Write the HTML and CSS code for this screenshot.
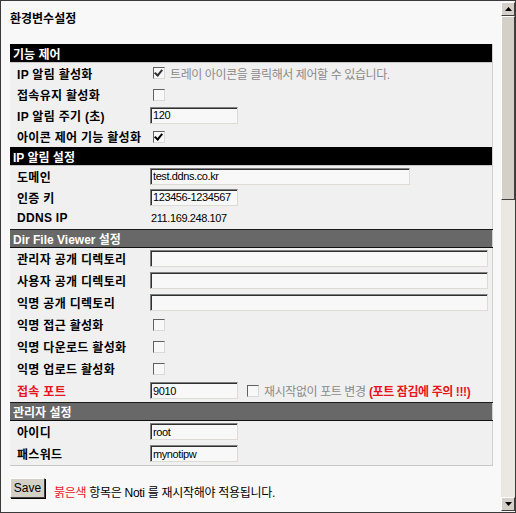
FILE: index.html
```html
<!DOCTYPE html>
<html>
<head>
    <title>환경변수설정</title>
    <link rel="stylesheet" href="styles.css">
</head>
<body>
    <div class="frame">
        <div class="page">
            <h2 class="title">환경변수설정</h2>
            <table class="settings">
                <tbody class="short">
                    <tr><th colspan="2" class="head">기능 제어</th></tr>
                    <tr>
                        <td class="label">IP 알림 활성화</td>
                        <td><span class="check on dim"></span><span class="note">트레이 아이콘을 클릭해서 제어할 수 있습니다.</span></td>
                    </tr>
                    <tr>
                        <td class="label">접속유지 활성화</td>
                        <td><span class="check"></span></td>
                    </tr>
                    <tr>
                        <td class="label">IP 알림 주기 (초)</td>
                        <td><input class="field small" value="120"></td>
                    </tr>
                    <tr>
                        <td class="label">아이콘 제어 기능 활성화</td>
                        <td><span class="check on"></span></td>
                    </tr>
                    <tr><th colspan="2" class="head">IP 알림 설정</th></tr>
                    <tr>
                        <td class="label">도메인</td>
                        <td><input class="field mid" value="test.ddns.co.kr"></td>
                    </tr>
                    <tr>
                        <td class="label">인증 키</td>
                        <td><input class="field small" value="123456-1234567"></td>
                    </tr>
                    <tr>
                        <td class="label">DDNS IP</td>
                        <td class="plain">211.169.248.107</td>
                    </tr>
                </tbody>
                <tbody class="tall">
                    <tr><th colspan="2" class="head gray">Dir File Viewer 설정</th></tr>
                    <tr>
                        <td class="label">관리자 공개 디렉토리</td>
                        <td><input class="field wide" value=""></td>
                    </tr>
                    <tr>
                        <td class="label">사용자 공개 디렉토리</td>
                        <td><input class="field wide" value=""></td>
                    </tr>
                    <tr>
                        <td class="label">익명 공개 디렉토리</td>
                        <td><input class="field wide" value=""></td>
                    </tr>
                    <tr>
                        <td class="label">익명 접근 활성화</td>
                        <td><span class="check"></span></td>
                    </tr>
                    <tr>
                        <td class="label">익명 다운로드 활성화</td>
                        <td><span class="check"></span></td>
                    </tr>
                    <tr>
                        <td class="label">익명 업로드 활성화</td>
                        <td><span class="check"></span></td>
                    </tr>
                    <tr>
                        <td class="label red">접속 포트</td>
                        <td>
                            <input class="field small" value="9010"><span class="check dim port"></span><span class="note">재시작없이 포트 변경</span>
                            <span class="warn">(포트 잠김에 주의 !!!)</span>
                        </td>
                    </tr>
                    <tr><th colspan="2" class="head gray">관리자 설정</th></tr>
                    <tr>
                        <td class="label">아이디</td>
                        <td><input class="field small" value="root"></td>
                    </tr>
                    <tr>
                        <td class="label">패스워드</td>
                        <td><input class="field small" value="mynotipw"></td>
                    </tr>
                </tbody>
            </table>
            <div class="footer">
                <button class="save">Save</button>
                <span class="hint"><span class="red-text">붉은색</span> 항목은 Noti 를 재시작해야 적용됩니다.</span>
            </div>
        </div>
        <div class="scrollbar">
            <div class="arrow up">
                <svg width="7" height="4" viewBox="0 0 7 4"><path d="M3.5 0 L7 4 L0 4 Z" fill="#000"/></svg>
            </div>
            <div class="thumb"></div>
            <div class="track"></div>
            <div class="arrow down">
                <svg width="7" height="4" viewBox="0 0 7 4"><path d="M0 0 L7 0 L3.5 4 Z" fill="#000"/></svg>
            </div>
        </div>
    </div>
</body>
</html>
```

FILE: styles.css
```css
body {
    margin: 0;
    font-family: "Liberation Sans", "Noto Sans CJK KR", sans-serif;
    font-size: 12px;
    color: #000;
}

.frame {
    width: 516px;
    height: 513px;
    box-sizing: border-box;
    border: 1px solid #3a3a3a;
    display: flex;
    overflow: hidden;
}

.page {
    flex: 1;
    background-color: #f8f8f8;
    padding: 0 6px 0 9px;
    overflow: hidden;
}

.title {
    font-size: 12px;
    font-weight: bold;
    margin: 0;
    height: 43px;
    line-height: 36px;
}

/* settings table */
.settings {
    width: 483px;
    border-collapse: collapse;
    background-color: #f0f0f0;
    border-right: 1px solid #d0d0d0;
    border-bottom: 1px solid #c8c8c8;
}

.settings td {
    padding: 0 0 1px 0;
    white-space: nowrap;
}

.short td {
    height: 20px;
}

.tall td {
    height: 21px;
}

.tall .admin td {
    height: 20px;
}

.head {
    background-color: #000;
    color: #fff;
    font-weight: bold;
    text-align: left;
    height: 18px;
    padding: 0 0 0 3px;
    border-bottom: 1px solid #c8c8c8;
}

.head.gray {
    background-color: #686868;
    border-top: 1px solid #1a1a1a;
    border-bottom: 1px solid #111;
    height: 16px;
}

.label {
    width: 133px;
    padding-left: 7px !important;
    font-weight: bold;
    letter-spacing: 0.3px;
}

.label.red {
    color: #e8141b;
}

.plain {
    padding-left: 1px !important;
    font-size: 11px;
    letter-spacing: -0.4px;
}

.field {
    box-sizing: border-box;
    height: 17px;
    margin: 0;
    padding: 0 0 0 2px;
    vertical-align: middle;
    font-family: "Liberation Sans", "Noto Sans CJK KR", sans-serif;
    font-size: 11px;
    letter-spacing: -0.4px;
    background-color: #f8f8f8;
    border: 1px solid;
    border-color: #808080 #dedbd4 #dedbd4 #808080;
    box-shadow: inset 1px 1px 0 #303030;
    outline: none;
}

.field.small {
    width: 88px;
}

.field.mid {
    width: 260px;
}

.field.wide {
    width: 338px;
}

.check {
    display: inline-block;
    box-sizing: border-box;
    width: 12px;
    height: 12px;
    margin-left: 3px;
    vertical-align: middle;
    background-color: #f8f8f8;
    border: 1px solid;
    border-color: #606060 #d8d8d8 #d8d8d8 #606060;
    position: relative;
}

.check.on::after {
    content: "";
    position: absolute;
    left: 2px;
    top: 0;
    width: 3px;
    height: 6px;
    border: solid #000;
    border-width: 0 2px 2px 0;
    transform: rotate(40deg);
}

.check.on.dim::after {
    border-color: #303030;
}

.check.port {
    margin-left: 9px;
}

.note {
    color: #8a8a8a;
    margin-left: 5px;
    vertical-align: middle;
    letter-spacing: -0.4px;
}

.warn {
    color: #e8141b;
    font-weight: bold;
    vertical-align: middle;
    letter-spacing: -0.4px;
}

/* footer */
.footer {
    display: flex;
    align-items: flex-start;
    margin-top: 12px;
}

.save {
    width: 35px;
    height: 20px;
    padding: 0;
    margin-left: 0;
    font-family: "Liberation Sans", sans-serif;
    font-size: 12px;
    background-color: #d4d0c8;
    border: 1px solid;
    border-color: #fff #404040 #404040 #fff;
    box-shadow: 1px 1px 0 #000;
}

.hint {
    margin: 5px 0 0 9px;
    letter-spacing: -0.3px;
}

.red-text {
    color: #e8141b;
}

/* fake scrollbar */
.scrollbar {
    width: 16px;
    display: flex;
    flex-direction: column;
    background-color: #f8f8f8;
    padding: 1px 0 1px 2px;
    box-sizing: border-box;
}

.arrow {
    height: 14px;
    display: flex;
    align-items: center;
    justify-content: center;
    background-color: #d4d0c8;
    border: 1px solid;
    border-color: #fff #404040 #404040 #fff;
    box-sizing: border-box;
}

.thumb {
    height: 184px;
    background-color: #d4d0c8;
    border: 1px solid;
    border-color: #fff #404040 #404040 #fff;
    box-sizing: border-box;
}

.track {
    flex: 1;
    background-color: #ebe8e2;
}
```
